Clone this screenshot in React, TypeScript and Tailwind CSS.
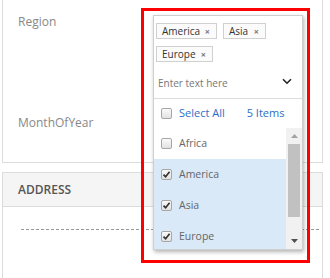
import React from "react";

function Check({ checked }: { checked: boolean }) {
  return (
    <span className="flex h-[11px] w-[11px] items-center justify-center rounded-[2px] border border-[#a6a6a6] bg-gradient-to-b from-[#fafafa] to-[#e2e2e2]">
      {checked && (
        <svg width="9" height="9" viewBox="0 0 9 9">
          <path d="M1.5 4.6 L3.6 6.8 L7.6 1.8" fill="none" stroke="#333" strokeWidth="1.7" />
        </svg>
      )}
    </span>
  );
}

function Chip({ label, w }: { label: string; w: string }) {
  return (
    <span className={`flex h-[16px] items-center justify-between border border-[#d0d0d0] bg-[#fbfbfb] pl-[5px] pr-[6px] text-[10px] leading-none text-[#333] ${w}`}>
      <span>{label}</span>
      <span className="text-[9px] font-bold text-[#777]">×</span>
    </span>
  );
}

function Row({ label, checked }: { label: string; checked: boolean }) {
  return (
    <div className={`flex h-[31px] items-center gap-[7px] pl-[7px] ${checked ? "bg-[#d9e9f7]" : "bg-white"}`}>
      <Check checked={checked} />
      <span className="text-[10.5px] text-[#666]">{label}</span>
    </div>
  );
}

export default function App() {
  return (
    <div
      className="relative h-[278px] w-[330px] overflow-hidden bg-white"
      style={{ fontFamily: '"Open Sans", sans-serif' }}
    >
      {/* background panels */}
      <div className="ml-[2px] h-[163px] w-[321px] border-b border-l border-r border-[#dcdcdc]">
        <div className="pl-[15px] pt-[14px] text-[12px] leading-[16px] text-[#888]">Region</div>
        <div className="pl-[15px] pt-[85px] text-[12px] leading-[16px] text-[#888]">MonthOfYear</div>
      </div>
      <div className="ml-[2px] mt-[9px] h-[120px] w-[321px] border-l border-r border-t border-[#dcdcdc]">
        <div className="flex h-[34px] items-center border-b border-[#dcdcdc] bg-[#f5f5f5] pl-[15px] text-[12px] font-semibold text-[#555]">
          ADDRESS
        </div>
        <div className="ml-[18px] mr-[3px] mt-[22px] border-t border-dashed border-[#999]" />
      </div>

      {/* highlight frame */}
      <div className="absolute left-[141px] top-[8px] h-[255px] w-[169px] border-[3px] border-[#ff0000]" />

      {/* popup */}
      <div className="absolute left-[153px] top-[15px] flex h-[235px] w-[150px] flex-col border border-[#cfcfcf] bg-white shadow-[1px_2px_4px_rgba(0,0,0,0.3)]">
        <div className="flex flex-wrap gap-x-[6px] gap-y-[7px] pl-[2px] pt-[7px]">
          <Chip label="America" w="w-[61px]" />
          <Chip label="Asia" w="w-[43px]" />
          <Chip label="Europe" w="w-[57px]" />
        </div>
        <div className="flex h-[36px] items-center justify-between pl-[4px] pr-[10px] pt-[6px]">
          <span className="text-[10px] text-[#777]">Enter text here</span>
          <svg width="10" height="7" viewBox="0 0 10 7" className="-mt-[3px]">
            <path d="M1 1.2 L5 5.2 L9 1.2" fill="none" stroke="#222" strokeWidth="1.6" />
          </svg>
        </div>
        <div className="flex h-[30px] items-center border-t border-[#dcdcdc] pl-[7px]">
          <Check checked={false} />
          <span className="ml-[7px] text-[11px] text-[#2d6ec7]">Select All</span>
          <span className="ml-[22px] text-[11px] text-[#2d6ec7]">5 Items</span>
        </div>
        <div className="flex flex-1 overflow-hidden">
          <div className="flex-1">
            <Row label="Africa" checked={false} />
            <Row label="America" checked />
            <Row label="Asia" checked />
            <Row label="Europe" checked />
          </div>
          <div className="flex w-[16px] flex-col bg-[#f1f1f1]">
            <div className="flex h-[16px] items-center justify-center">
              <svg width="7" height="4" viewBox="0 0 7 4"><path d="M0 4 L3.5 0 L7 4 Z" fill="#a3a3a3" /></svg>
            </div>
            <div className="mx-[2px] h-[73px] bg-[#c1c1c1]" />
            <div className="flex-1" />
            <div className="flex h-[16px] items-center justify-center">
              <svg width="7" height="4" viewBox="0 0 7 4"><path d="M0 0 L3.5 4 L7 0 Z" fill="#505050" /></svg>
            </div>
          </div>
        </div>
      </div>
    </div>
  );
}
